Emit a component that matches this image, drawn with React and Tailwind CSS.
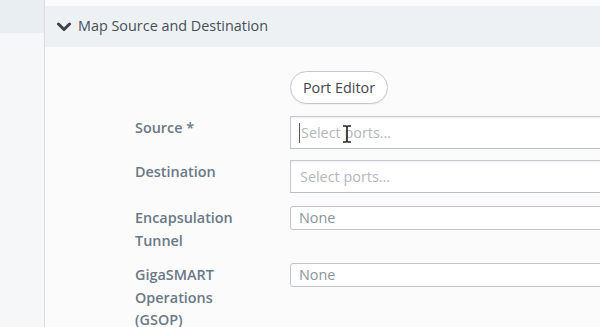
import React from "react";

function Chevron() {
  return (
    <svg width="14" height="10" viewBox="0 0 14 10" className="shrink-0">
      <path d="M1.5 2 L7 7.5 L12.5 2" fill="none" stroke="#3d434a" strokeWidth="3" strokeLinecap="round" strokeLinejoin="round" />
    </svg>
  );
}

function IBeam() {
  return (
    <svg width="10" height="18" viewBox="0 0 10 18" className="absolute left-[51px] top-[8px]">
      <path d="M1 1 H4 Q5 1 5 3 V15 Q5 17 4 17 H1 M9 1 H6 Q5 1 5 3 M5 15 Q5 17 6 17 H9" fill="none" stroke="#222" strokeWidth="1.6" />
    </svg>
  );
}

export default function App() {
  const font = { fontFamily: '"Open Sans", "Liberation Sans", sans-serif' };
  return (
    <div className="flex h-[327px] w-[600px] overflow-hidden bg-white" style={font}>
      <div className="w-[45px] shrink-0 border-r border-[#d8dce1] bg-[#f6f7f8]">
        <div className="h-[33px] bg-[#e9eef3]" />
      </div>
      <div className="flex-1 flex flex-col pt-[6px] bg-[#fbfbfc] min-w-0">
        <div className="h-[41px] shrink-0 bg-[#eef1f4] flex items-center pl-[12px] gap-[7px]">
          <Chevron />
          <span className="text-[14.4px] text-[#474f58] leading-none">Map Source and Destination</span>
        </div>
        <div className="shrink-0 pl-[90px] pt-[24px]">
          <div className="flex mb-[12px]">
            <div className="w-[155px] shrink-0" />
            <button className="h-[33px] w-[98px] rounded-full border border-[#c4c8cc] bg-white text-[14.4px] text-[#3f464d] shadow-[0_1px_1px_rgba(0,0,0,0.05)]">
              Port Editor
            </button>
          </div>
          <div className="flex mb-[11px]">
            <div className="w-[155px] shrink-0 text-[14.4px] font-semibold leading-[23px] text-[#6b7886]">Source *</div>
            <div className="relative h-[33px] w-[400px] shrink-0 border border-[#c6cacf] border-b-[#b9bec4] bg-white shadow-[inset_0_1px_2px_rgba(0,0,0,0.08)] flex items-center pl-[8px]">
              <span className="w-px h-[20px] bg-[#555] mr-px" />
              <span className="text-[14.4px] text-[#b3b8bd]">Select ports...</span>
              <IBeam />
            </div>
          </div>
          <div className="flex mb-[13px]">
            <div className="w-[155px] shrink-0 text-[14.4px] font-semibold leading-[23px] text-[#6b7886]">Destination</div>
            <div className="h-[33px] w-[400px] shrink-0 border border-[#c6cacf] border-b-[#b9bec4] bg-white shadow-[inset_0_1px_2px_rgba(0,0,0,0.08)] flex items-center pl-[9px]">
              <span className="text-[14.4px] text-[#b3b8bd]">Select ports...</span>
            </div>
          </div>
          <div className="flex mb-[11px]">
            <div className="w-[120px] mr-[35px] shrink-0 text-[14.4px] font-semibold leading-[23px] text-[#6b7886]">Encapsulation Tunnel</div>
            <div className="h-[24px] w-[400px] shrink-0 rounded-[3px] border border-[#c2c6cb] bg-white flex items-center pl-[8px]">
              <span className="text-[14.4px] text-[#8b939b]">None</span>
            </div>
          </div>
          <div className="flex">
            <div className="w-[120px] mr-[35px] shrink-0 text-[14.4px] font-semibold leading-[22.5px] text-[#6b7886] pt-px">GigaSMART Operations (GSOP)</div>
            <div className="h-[24px] w-[400px] shrink-0 rounded-[3px] border border-[#c2c6cb] bg-white flex items-center pl-[8px]">
              <span className="text-[14.4px] text-[#8b939b]">None</span>
            </div>
          </div>
        </div>
      </div>
    </div>
  );
}
